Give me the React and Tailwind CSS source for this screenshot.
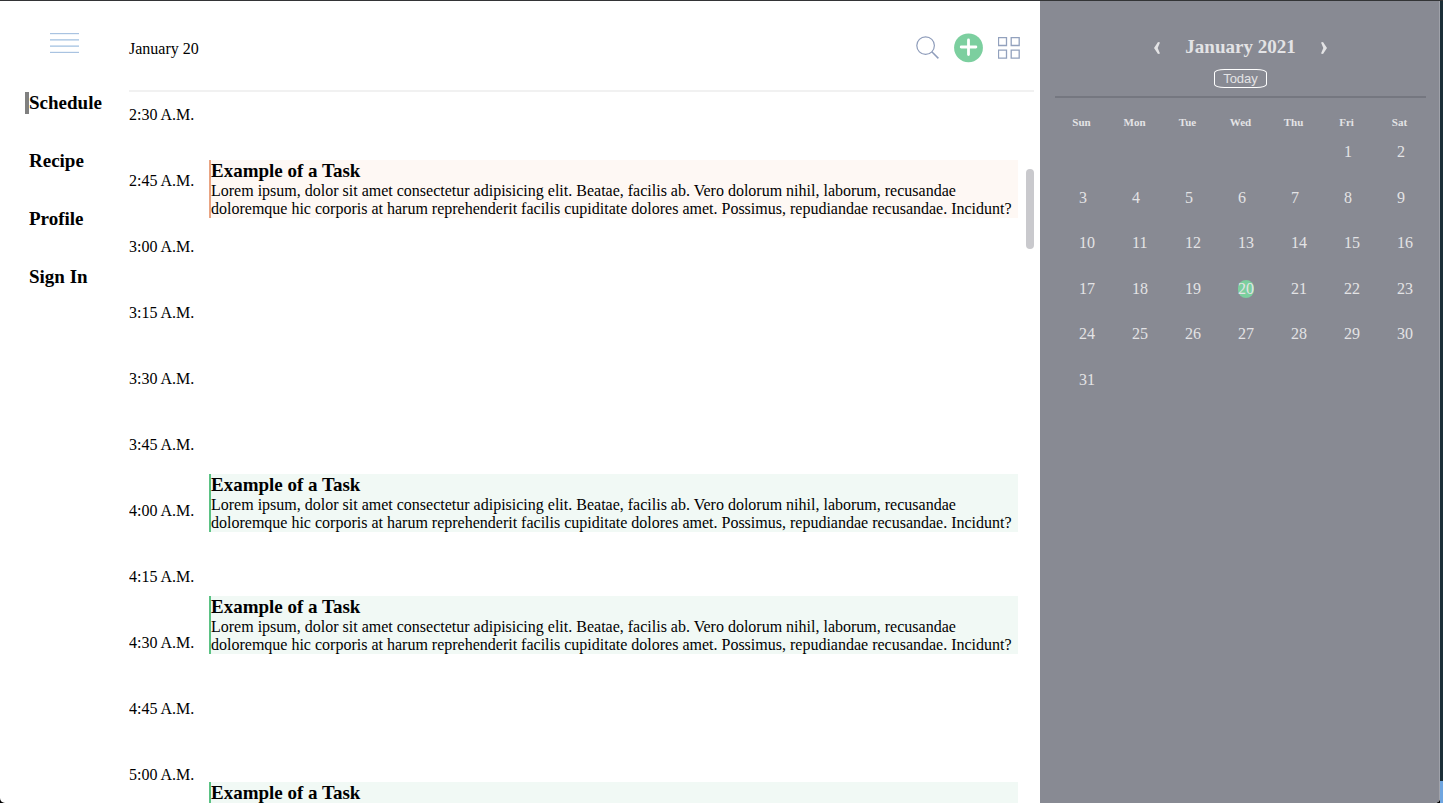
import React from "react";

const navItems = ["Schedule", "Recipe", "Profile", "Sign In"];

const times = [
  "2:30 A.M.",
  "2:45 A.M.",
  "3:00 A.M.",
  "3:15 A.M.",
  "3:30 A.M.",
  "3:45 A.M.",
  "4:00 A.M.",
  "4:15 A.M.",
  "4:30 A.M.",
  "4:45 A.M.",
  "5:00 A.M.",
];

const tasks = [
  { id: 1, style: "mt-[68px] border-[#eaa583] bg-[#fef8f4]" },
  { id: 2, style: "mt-64 border-[#5bc284] bg-[#f1f9f5]" },
  { id: 3, style: "mt-16 border-[#5bc284] bg-[#f1f9f5]" },
  { id: 4, style: "mt-32 border-[#5bc284] bg-[#f1f9f5]" },
];

const weekdays = ["Sun", "Mon", "Tue", "Wed", "Thu", "Fri", "Sat"];
const blanks = [0, 1, 2, 3, 4];
const days = Array.from({ length: 31 }, (_, i) => i + 1);

function MenuIcon() {
  return (
    <svg width="30" height="22" viewBox="0 0 30 22" fill="none" aria-hidden="true">
      <path d="M0 2.500h29M0 19.500h29" stroke="#eef4fa" />
      <path d="M0 1.500h29M0 20.500h29" stroke="#a9c3e1" />
      <path d="M0 7.500h29M0 14.500h29" stroke="#b8d0e8" />
      <path d="M0 8.500h29M0 13.500h29" stroke="#cfdff0" />
    </svg>
  );
}

function SearchIcon() {
  return (
    <svg width="24" height="24" viewBox="0 0 24 24" fill="none" stroke="#8f9dbb" aria-hidden="true">
      <circle cx="9.6" cy="9.600" r="8.8" strokeWidth="1.2" />
      <path d="M15.800 15.800L22.400 22.400" strokeWidth="1.500" />
    </svg>
  );
}

function AddIcon() {
  return (
    <svg width="30" height="30" viewBox="0 0 30 30" fill="none" aria-hidden="true">
      <circle cx="14.500" cy="14.800" r="14.400" fill="#7ccf9f" />
      <path d="M14.500 7v14.500M7.200 14h14.700" stroke="#fff" strokeWidth="2.800" strokeLinecap="round" />
    </svg>
  );
}

function GridIcon() {
  return (
    <svg width="22" height="22" viewBox="0 0 22 22" fill="none" stroke="#92a1bd" aria-hidden="true">
      <path d="M.5.5h8v8h-8zM13.200.5h8v8h-8zM.5 13.200h8v8h-8zM13.200 13.200h8v8h-8z" strokeWidth="1.300" />
    </svg>
  );
}

function Chevron({ flip }) {
  return (
    <svg width="8" height="12" viewBox="0 0 8 12" fill="#e3e3e5" aria-hidden="true">
      <path d={flip ? "M1 .5L3 0L7 6L3 12L1 11.500L3.300 6z" : "M7 .5L5 0L1 6L5 12L7 11.500L4.700 6z"} />
    </svg>
  );
}

function Task({ style }) {
  return (
    <article className={"h-[58px] shrink-0 border-l-2 " + style}>
      <h3 className="text-[19px] leading-[22px] font-bold">Example of a Task</h3>
      <p className="text-base leading-[18px]">
        Lorem ipsum, dolor sit amet consectetur adipisicing elit. Beatae, facilis ab. Vero dolorum nihil, laborum,
        recusandae doloremque hic corporis at harum reprehenderit facilis cupiditate dolores amet. Possimus,
        repudiandae recusandae. Incidunt?
      </p>
    </article>
  );
}

function Sidebar() {
  return (
    <nav className="flex w-[129px] shrink-0 flex-col pt-[31px] pl-[25px]">
      <button type="button" aria-label="Menu" className="ml-[25px] w-[30px]">
        <MenuIcon />
      </button>
      <ul className="mt-[38px] flex flex-col gap-9 text-[19px] leading-[22px] font-bold">
        {navItems.map((item) => (
          <li key={item} className={item === "Schedule" ? "border-l-4 border-[#808080]" : "border-l-4 border-transparent"}>
            <a href="#">{item}</a>
          </li>
        ))}
      </ul>
    </nav>
  );
}

function Schedule() {
  return (
    <main className="relative flex min-w-0 flex-1 flex-col pr-[6px]">
      <header className="flex h-[91px] shrink-0 items-center border-b-2 border-[#f1f1f1] pt-1">
        <p className="flex-1 pt-0.5 text-base">January 20</p>
        <div className="flex items-center gap-[14px] pr-[14px]">
          <button type="button" aria-label="Search">
            <SearchIcon />
          </button>
          <button type="button" aria-label="Add task">
            <AddIcon />
          </button>
          <button type="button" aria-label="Grid view">
            <GridIcon />
          </button>
        </div>
      </header>
      <div className="flex min-h-0 flex-1 overflow-hidden pr-4">
        <ol className="flex w-20 shrink-0 flex-col gap-12 pt-[14px] text-base leading-[18px]">
          {times.map((time) => (
            <li key={time}>{time}</li>
          ))}
        </ol>
        <section className="flex min-w-0 flex-1 flex-col">
          {tasks.map((task) => (
            <Task key={task.id} style={task.style} />
          ))}
        </section>
      </div>
      <span className="absolute top-[168px] right-[6px] h-20 w-2 rounded-full bg-[#c9c9cd]" />
    </main>
  );
}

function Calendar() {
  return (
    <aside className="w-[400px] shrink-0 border-r border-[#a0a2aa] bg-[#888a93] pr-[13px] pl-[15px] text-[#e3e3e5]">
      <header className="flex flex-col items-center border-b-2 border-[#757780] pt-[35px] pb-2">
        <div className="flex items-center gap-6">
          <button type="button" aria-label="Previous month" className="pt-0.5">
            <Chevron />
          </button>
          <h2 className="text-[19px] leading-[22px] font-bold">January 2021</h2>
          <button type="button" aria-label="Next month" className="pt-0.5">
            <Chevron flip />
          </button>
        </div>
        <button
          type="button"
          className="mt-[11px] h-[19px] w-[53px] rounded-[20%] border border-white font-['Liberation_Sans',sans-serif] text-[13px] leading-[17px]"
        >
          Today
        </button>
      </header>
      <div className="grid grid-cols-7 pt-[17px] text-center text-[11px] leading-[14px] font-bold">
        {weekdays.map((day) => (
          <span key={day}>{day}</span>
        ))}
      </div>
      <ol className="mt-[14px] grid h-[273px] grid-cols-7 grid-rows-6 text-base leading-[18px]">
        {blanks.map((n) => (
          <li key={n} aria-hidden="true" />
        ))}
        {days.map((day) => (
          <li key={day} className="pl-6">
            {day === 20 ? (
              <span className="block w-4 rounded-full bg-[#7bcf9e]">{day}</span>
            ) : (
              <span>{day}</span>
            )}
          </li>
        ))}
      </ol>
    </aside>
  );
}

export default function App() {
  return (
    <div className="flex h-screen overflow-hidden border-t border-[#333436] bg-[#1b2f38] font-['Liberation_Serif',serif] text-black">
      <div className="flex min-w-0 flex-1 bg-black">
        <div className="flex min-w-0 flex-1 overflow-hidden rounded-b-[5px] bg-white">
          <Sidebar />
          <Schedule />
          <Calendar />
        </div>
      </div>
      <div className="flex w-[3px] shrink-0 flex-col justify-end">
        <span className="h-[22px] bg-[#6fa5df]" />
      </div>
    </div>
  );
}
